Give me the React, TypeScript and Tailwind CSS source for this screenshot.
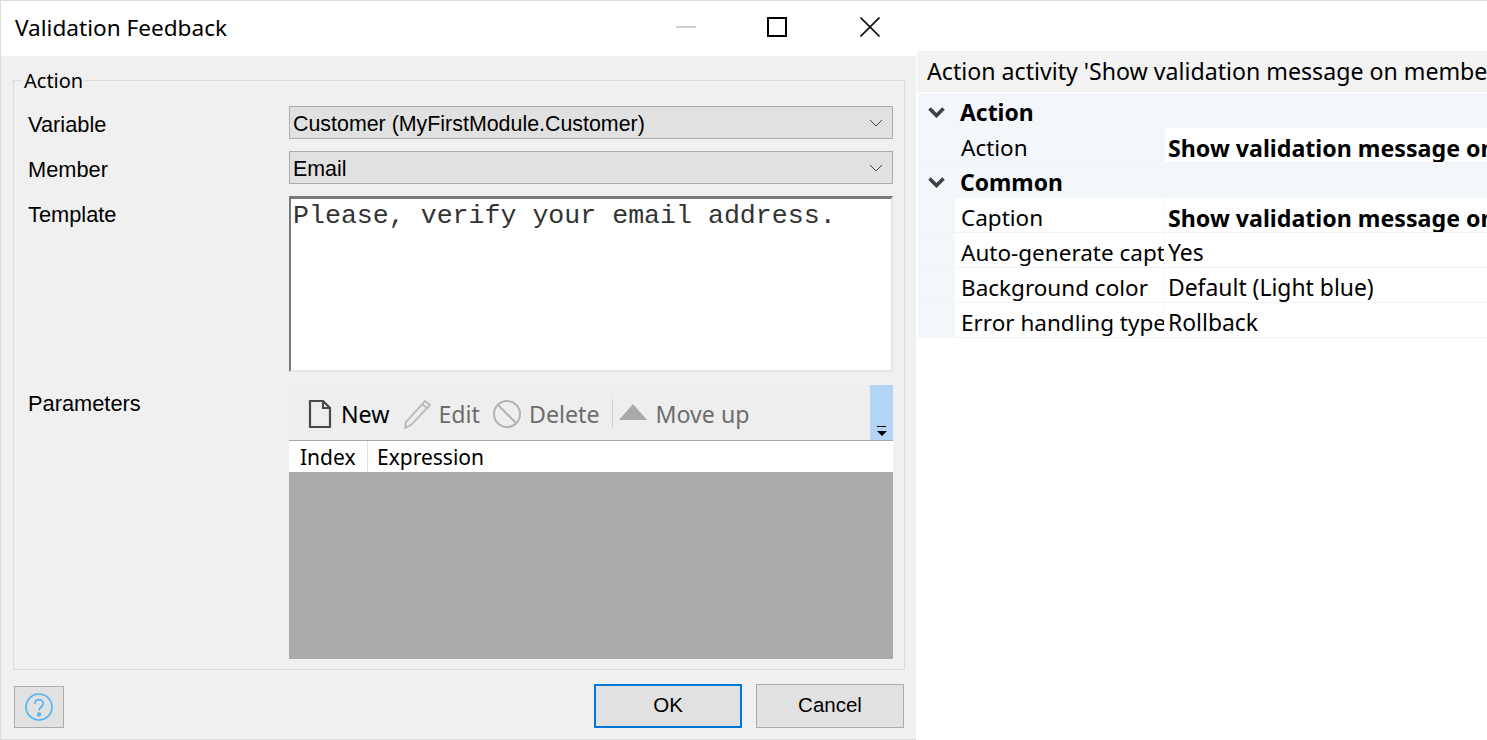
import { ReactNode } from "react";

const LABEL = "font-['Liberation_Sans',sans-serif] text-[21.8px] leading-[26px] text-black";
const SELECT_TEXT = "font-['Liberation_Sans',sans-serif] text-[21.4px] leading-[26px] text-black";

function Chevron() {
  return (
    <svg className="w-[14px] h-[8px] shrink-0" viewBox="0 0 14 8" fill="none" stroke="#444" strokeWidth={1}>
      <path d="M1 1l6 6 6-6" />
    </svg>
  );
}

function CategoryChevron() {
  return (
    <svg className="w-[17px] h-[11px] shrink-0" viewBox="0 0 17 11" fill="none" stroke="#404040" strokeWidth={3.6}>
      <path d="M1.5 1.5l7 7 7-7" />
    </svg>
  );
}

function Select({ value }: { value: string }) {
  return (
    <div className="h-[33px] bg-[#e1e1e1] border border-[#adadad] flex items-center justify-between pl-[3px] pr-[9px]">
      <span className={`${SELECT_TEXT} mt-[2px]`}>{value}</span>
      <Chevron />
    </div>
  );
}

function ToolButton({ icon, label, disabled }: { icon: ReactNode; label: string; disabled?: boolean }) {
  return (
    <div className="flex items-center gap-[9px]">
      {icon}
      <span className={`font-['Noto_Sans',sans-serif] text-[23.2px] leading-[30px] ${disabled ? "text-[#6d6d6d]" : "text-black"}`}>
        {label}
      </span>
    </div>
  );
}

function PropRow({ name, value, bold, label }: { name: string; value: string; bold?: boolean; label?: boolean }) {
  return (
    <div className="flex h-[35px] border-b border-[#f1f4fa]">
      {label ? (
        <div className="w-[246px] shrink-0 pl-[43px] pt-[2px] overflow-hidden whitespace-nowrap leading-[36px] text-[22.5px]">{name}</div>
      ) : (
        <div className="w-[209px] ml-[37px] shrink-0 pl-[6px] pt-[2px] bg-white overflow-hidden whitespace-nowrap leading-[36px] text-[22.5px]">{name}</div>
      )}
      <div className="flex-1 ml-[1px] pl-[3px] pt-[2px] bg-white whitespace-nowrap overflow-hidden leading-[36px]">
        {bold ? <span className="font-bold text-[23.2px]">{value}</span> : value}
      </div>
    </div>
  );
}

function Category({ name }: { name: string }) {
  return (
    <div className="flex items-center h-[35px] pt-[4px] pl-[10px] gap-[15px]">
      <CategoryChevron />
      <span className="font-bold leading-[31px]">{name}</span>
    </div>
  );
}

export default function App() {
  return (
    <div className="w-[1487px] h-[740px] flex bg-white border-t border-[#dcdcdc] overflow-hidden">
      {/* Dialog */}
      <div className="w-[916px] h-full shrink-0 flex flex-col border-l border-b border-[#dcdcdc] bg-[#f0f0f0]">
        <div className="h-[55px] shrink-0 bg-white flex items-center pb-[3px]">
          <span className="pl-[14px] mt-[2px] font-['Noto_Sans',sans-serif] text-[22.6px] text-black">Validation Feedback</span>
          <div className="ml-auto flex items-center pr-[36px]">
            <div className="w-[20px] h-[2px] bg-[#cfcfcf]" />
            <div className="w-[20px] h-[20px] ml-[71px] border-2 border-black" />
            <svg className="w-[20px] h-[20px] ml-[73px]" viewBox="0 0 20 20" stroke="#111" strokeWidth={1.6}>
              <path d="M0.5 0.5l19 19M19.5 0.5l-19 19" />
            </svg>
          </div>
        </div>

        <div className="flex-1 flex flex-col pl-[12px] pr-[11px]">
          {/* Group box */}
          <fieldset className="mt-[12px] h-[602px] border border-[#dcdcdc] pl-[14px] pr-[10px]">
            <legend className="ml-[-6px] px-[2px] translate-y-px font-['Noto_Sans',sans-serif] text-[20px] leading-[24px] -mb-px">Action</legend>
            <div className="grid grid-cols-[261px_604px] grid-rows-[33px_33px_176px_275px] gap-y-[12px] pt-[15px]">
              <div className={`${LABEL} pt-[6px]`}>Variable</div>
              <Select value="Customer (MyFirstModule.Customer)" />
              <div className={`${LABEL} pt-[6px]`}>Member</div>
              <Select value="Email" />
              <div className={`${LABEL} pt-[6px]`}>Template</div>
              <div className="border-2 border-t-[3px] border-r-[#e6e6e6] border-b-[#e6e6e6] border-l-[#7a7a7a] border-t-[#7a7a7a] bg-white pl-[2px] pt-[2px] font-['Liberation_Mono',monospace] text-[26.6px] leading-[30px] text-[#333] whitespace-nowrap">
                Please, verify your email address.
              </div>
              <div className={`${LABEL} pt-[7px]`}>Parameters</div>
              <div className="flex flex-col mt-px">
                <div className="h-[56px] shrink-0 bg-[#eeeeee] flex items-center pl-[19px] relative border-b border-[#a8a8a8]">
                  <div className="flex items-center gap-[14px] mt-[2px]">
                    <ToolButton
                      label="New"
                      icon={
                        <svg className="w-[24px] h-[30px]" viewBox="0 0 24 30" fill="none" stroke="#4a4a4a" strokeWidth={2.2}>
                          <path d="M2 2h13l7 7v19H2zM15 2v7h7" />
                        </svg>
                      }
                    />
                    <ToolButton
                      disabled
                      label="Edit"
                      icon={
                        <svg className="w-[28px] h-[30px] -mr-[2px]" viewBox="0 0 28 30" fill="none" stroke="#bdbdbd" strokeWidth={2}>
                          <path d="M22 2l5 4L8 26l-6 3 1-6zM19 5l5 4" />
                        </svg>
                      }
                    />
                    <div className="-ml-px">
                      <ToolButton
                        disabled
                        label="Delete"
                        icon={
                          <svg className="w-[28px] h-[28px] -mr-px" viewBox="0 0 28 28" fill="none" stroke="#b3b3b3" strokeWidth={2}>
                            <circle cx="14" cy="14" r="13" />
                            <path d="M5 5l18 18" />
                          </svg>
                        }
                      />
                    </div>
                    <div className="w-px h-[29px] bg-[#cfcfcf] -ml-[2px]" />
                  </div>
                  <div className="ml-[6px] mt-[2px]">
                    <ToolButton
                      disabled
                      label="Move up"
                      icon={
                        <svg className="w-[28px] h-[16px] -mt-[4px]" viewBox="0 0 28 16" fill="#aaaaaa">
                          <path d="M14 0l14 16H0z" />
                        </svg>
                      }
                    />
                  </div>
                  {/* Overflow chevron */}
                  <div className="absolute right-0 top-0 bottom-0 w-[23px] bg-[#b3d5f5] flex flex-col items-center justify-end pb-[4px] gap-[4px]">
                    <div className="w-[9px] h-px bg-black" />
                    <div className="w-0 h-0 border-x-[5px] border-x-transparent border-t-[5px] border-t-black" />
                  </div>
                </div>
                <div className="h-[31px] shrink-0 bg-white flex text-[21px] font-['Noto_Sans',sans-serif] leading-[33px] text-black overflow-hidden">
                  <div className="w-[79px] pl-[11px] border-r border-[#e3e3e3]">Index</div>
                  <div className="pl-[9px]">Expression</div>
                </div>
                <div className="flex-1 bg-[#ababab]" />
              </div>
            </div>
          </fieldset>

          {/* Footer */}
          <div className="flex items-start pt-[14px]">
            <button className="w-[50px] h-[42px] ml-px mt-[2px] bg-[#e1e1e1] border border-[#adadad] flex items-center justify-center">
              <svg className="w-[28px] h-[28px]" viewBox="0 0 28 28" fill="none" stroke="#53b5f5" strokeWidth={1.7}>
                <circle cx="14" cy="14" r="13" />
                <path d="M9.8 11c0-6 8.4-5.4 8.4-.4 0 3.4-4.2 3.4-4.2 7" />
                <circle cx="14" cy="21.5" r="1.3" fill="#53b5f5" />
              </svg>
            </button>
            <button className="font-['Liberation_Sans',sans-serif] text-[20.5px] text-black ml-auto mr-px pb-[2px] w-[148px] h-[44px] bg-[#e1e1e1] border-2 border-[#0078d7]">OK</button>
            <button className="font-['Liberation_Sans',sans-serif] text-[20.5px] text-black ml-[13px] mr-px pb-[2px] w-[148px] h-[44px] bg-[#e1e1e1] border border-[#adadad]">Cancel</button>
          </div>
        </div>
      </div>

      {/* Properties */}
      <div className="flex-1 min-w-0 pt-[50px] font-['Noto_Sans',sans-serif] text-[22.9px] text-black overflow-hidden">
        <div className="h-[41px] ml-px bg-[#f3f3f3] pl-[10px] leading-[41px] text-[23.15px] whitespace-nowrap overflow-hidden">
          Action activity 'Show validation message on member
        </div>
        <div className="ml-[2px] mt-px bg-[#f3f6fb]">
          <Category name="Action" />
          <PropRow label name="Action" value="Show validation message on member" bold />
          <Category name="Common" />
          <PropRow name="Caption" value="Show validation message on member" bold />
          <PropRow name="Auto-generate caption" value="Yes" />
          <PropRow name="Background color" value="Default (Light blue)" />
          <PropRow name="Error handling type" value="Rollback" />
        </div>
      </div>
    </div>
  );
}
